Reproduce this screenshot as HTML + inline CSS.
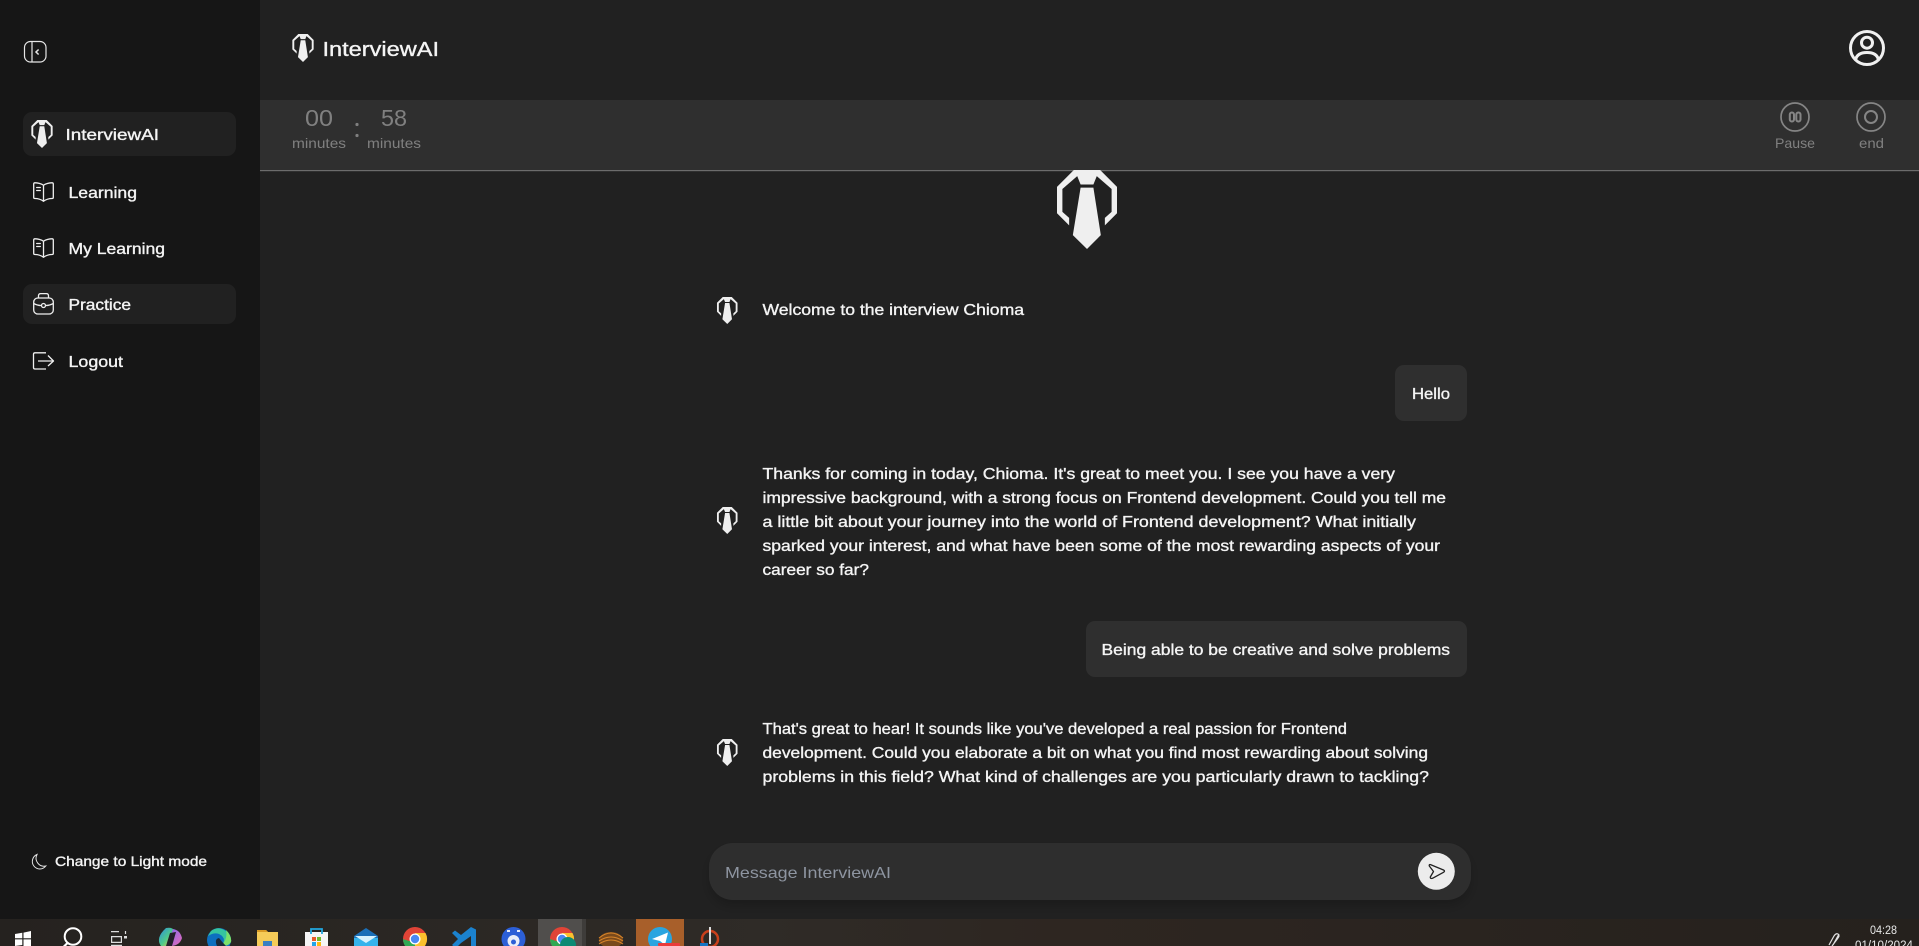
<!DOCTYPE html>
<html><head><meta charset="utf-8"><title>InterviewAI</title>
<style>
html,body{margin:0;padding:0;width:1919px;height:946px;overflow:hidden;background:#212121}
svg{display:block}
text{font-family:"Liberation Sans",sans-serif;fill:#f4f4f4;stroke:#f4f4f4;stroke-width:.36;font-size:16px}
.g{fill:#808080;stroke:none}
</style></head><body>
<svg width="1919" height="946" viewBox="0 0 1919 946" xmlns="http://www.w3.org/2000/svg">
<defs>
<symbol id="tie" viewBox="172 62 178 234">
<path fill="#efefef" d="M222 62L172 112V190L208 226V204L188 186V118L232 80L242 105H280L290 80L334 118V186L314 204V226L350 190V112L300 62Z"/>
<path fill="#efefef" d="M242 114H280L302 255L261 296L219 255Z"/>
</symbol>
<symbol id="book" viewBox="0 0 21 20"><g fill="none" stroke="#efefef" stroke-width="1.300" stroke-linejoin="round" stroke-linecap="round"><path d="M10.500 3.300C8.500 1.700 4 .7 1.900 .8Q.7 .9 .7 2V15.500Q.7 16.500 1.900 16.500C4.500 16.400 8.500 17.500 10.500 19.300C12.500 17.500 16.500 16.400 19.100 16.500Q20.300 16.500 20.300 15.500V2Q20.300 .9 19.100 .8C17 .7 12.500 1.700 10.500 3.300V19.300"/><path d="M3.700 5.500H7.300M3.700 8.500H7.300"/></g></symbol>
<linearGradient id="tb" x1="0" x2="1" y1="0" y2="0"><stop offset="0" stop-color="#25221f"/><stop offset=".4" stop-color="#2f2b27"/><stop offset=".55" stop-color="#2e2621"/><stop offset="1" stop-color="#25211d"/></linearGradient>
<linearGradient id="cl" x1="0" x2="1" y1="0" y2="1"><stop offset="0" stop-color="#2a8fe0"/><stop offset=".55" stop-color="#4fc98a"/><stop offset="1" stop-color="#f5c93a"/></linearGradient>
<linearGradient id="cr" x1="0" x2="1" y1="0" y2="1"><stop offset="0" stop-color="#7a6cf0"/><stop offset="1" stop-color="#e86ab8"/></linearGradient>
<filter id="sh" x="-5%" y="-30%" width="110%" height="170%"><feDropShadow dx="0" dy="6" stdDeviation="5" flood-color="#000" flood-opacity=".18"/></filter>
</defs>

<rect width="1919" height="946" fill="#212121"/>
<rect width="260" height="919" fill="#161616"/>

<!-- sidebar -->
<rect x="24.500" y="41.500" width="21.500" height="20.500" rx="6" fill="none" stroke="#e6e6e6" stroke-width="1.200"/>
<path d="M32 41.500V62" stroke="#e6e6e6" stroke-width="1.200"/>
<path d="M38.600 49.500L36 52L38.600 54.500" fill="none" stroke="#e6e6e6" stroke-width="1.500"/>

<rect x="23" y="112" width="213" height="44" rx="9" fill="#212121"/>
<rect x="23" y="284" width="213" height="40" rx="9" fill="#212121"/>
<use href="#tie" x="31" y="120" width="22" height="28"/>
<text x="65.500" y="140" textLength="93.500" lengthAdjust="spacingAndGlyphs">InterviewAI</text>
<use href="#book" x="33" y="182" width="21" height="20"/>
<text x="68.500" y="198" textLength="68.500" lengthAdjust="spacingAndGlyphs">Learning</text>
<use href="#book" x="33" y="238" width="21" height="20"/>
<text x="68.500" y="254" textLength="96.500" lengthAdjust="spacingAndGlyphs">My Learning</text>
<g fill="none" stroke="#efefef" stroke-width="1.300">
<rect x="33.700" y="298" width="19.600" height="16" rx="4"/>
<path d="M38.500 298V295.800Q38.500 293.600 40.700 293.600H46.300Q48.500 293.600 48.500 295.800V298"/>
<path d="M33.700 303.500Q37.500 305.500 41 305.500M53.300 303.500Q49.500 305.500 46 305.500"/>
<circle cx="43.500" cy="305.500" r="2"/>
</g>
<text x="68.500" y="310" textLength="62.500" lengthAdjust="spacingAndGlyphs">Practice</text>
<g fill="none" stroke="#efefef" stroke-width="1.300" stroke-linejoin="round">
<path d="M46 352.800H35Q33.500 352.800 33.500 354.300V367.500Q33.500 369 35 369H46"/>
<path d="M38 361H53M48 355.500L53.500 361L48 366"/>
</g>
<text x="68.500" y="367" textLength="54.500" lengthAdjust="spacingAndGlyphs">Logout</text>
<path d="M37 854.500A7.500 7.500 0 1 0 45.800 866A8 8 0 0 1 37 854.500Z" fill="none" stroke="#e6e6e6" stroke-width="1"/>
<text x="55" y="866" textLength="152" lengthAdjust="spacingAndGlyphs" style="font-size:14px">Change to Light mode</text>

<!-- header -->
<use href="#tie" x="292" y="34" width="22" height="28"/>
<text x="322.500" y="56" textLength="116.500" lengthAdjust="spacingAndGlyphs" style="font-size:20px">InterviewAI</text>
<g fill="none" stroke="#f0f0f0" stroke-width="3">
<circle cx="1867" cy="48" r="16.500"/>
<circle cx="1867" cy="42.700" r="5.500"/>
<path d="M1855.500 60Q1857 52.500 1867 52.500Q1877 52.500 1878.500 60"/>
</g>

<!-- timer bar -->
<rect x="260" y="100" width="1659" height="70" fill="#2f2f2f"/>
<rect x="260" y="170" width="1659" height="1.200" fill="#6c6c6c"/>
<text class="g" x="305" y="126" textLength="28" lengthAdjust="spacingAndGlyphs" style="font-size:23px">00</text>
<text class="g" x="292" y="148" textLength="54" lengthAdjust="spacingAndGlyphs" style="font-size:14px">minutes</text>
<circle cx="357" cy="124.500" r="1.600" fill="#808080"/><circle cx="357" cy="135.500" r="1.600" fill="#808080"/>
<text class="g" x="381" y="126" textLength="26" lengthAdjust="spacingAndGlyphs" style="font-size:23px">58</text>
<text class="g" x="367" y="148" textLength="54" lengthAdjust="spacingAndGlyphs" style="font-size:14px">minutes</text>
<g fill="none" stroke="#858585">
<circle cx="1795" cy="117" r="14" stroke-width="1.700"/>
<rect x="1789.800" y="112.500" width="4.200" height="9" rx="2" stroke-width="2"/>
<rect x="1796.300" y="112.500" width="4.200" height="9" rx="2" stroke-width="2"/>
<circle cx="1871" cy="117" r="14" stroke-width="1.700"/>
<circle cx="1871" cy="117" r="6" stroke-width="2"/>
</g>
<text class="g" x="1775" y="148" textLength="40" lengthAdjust="spacingAndGlyphs" style="font-size:14px">Pause</text>
<text class="g" x="1859" y="148" textLength="25" lengthAdjust="spacingAndGlyphs" style="font-size:14px">end</text>

<!-- big logo -->
<use href="#tie" x="1057" y="170" width="60" height="79"/>

<!-- chat -->
<use href="#tie" x="716" y="297" width="22.500" height="27"/>
<text x="762.500" y="315" textLength="261.500" lengthAdjust="spacingAndGlyphs">Welcome to the interview Chioma</text>

<rect x="1395" y="365" width="72" height="56" rx="9" fill="#2f2f2f"/>
<text x="1412" y="399" textLength="38" lengthAdjust="spacingAndGlyphs">Hello</text>

<use href="#tie" x="716" y="507" width="22.500" height="27"/>
<text x="762.500" y="479" textLength="632.500" lengthAdjust="spacingAndGlyphs">Thanks for coming in today, Chioma. It's great to meet you. I see you have a very</text>
<text x="762.500" y="503" textLength="683.500" lengthAdjust="spacingAndGlyphs">impressive background, with a strong focus on Frontend development. Could you tell me</text>
<text x="762.500" y="527" textLength="653.500" lengthAdjust="spacingAndGlyphs">a little bit about your journey into the world of Frontend development? What initially</text>
<text x="762.500" y="551" textLength="677.500" lengthAdjust="spacingAndGlyphs">sparked your interest, and what have been some of the most rewarding aspects of your</text>
<text x="762.500" y="575" textLength="106.500" lengthAdjust="spacingAndGlyphs">career so far?</text>

<rect x="1086" y="621" width="381" height="56" rx="9" fill="#2f2f2f"/>
<text x="1101.500" y="655" textLength="348.500" lengthAdjust="spacingAndGlyphs">Being able to be creative and solve problems</text>

<use href="#tie" x="716" y="739" width="22.500" height="27"/>
<text x="762.500" y="734" textLength="584.500" lengthAdjust="spacingAndGlyphs">That's great to hear! It sounds like you've developed a real passion for Frontend</text>
<text x="762.500" y="758" textLength="665.500" lengthAdjust="spacingAndGlyphs">development. Could you elaborate a bit on what you find most rewarding about solving</text>
<text x="762.500" y="782" textLength="666.500" lengthAdjust="spacingAndGlyphs">problems in this field? What kind of challenges are you particularly drawn to tackling?</text>

<!-- input -->
<rect x="709" y="843" width="762" height="57" rx="24" fill="#2f2f2f" filter="url(#sh)"/>
<text x="725" y="878" textLength="166" lengthAdjust="spacingAndGlyphs" style="fill:#8e95a1;stroke:none">Message InterviewAI</text>
<circle cx="1436.300" cy="871.300" r="18.500" fill="#ececec"/>
<path d="M1430.500 864.600L1443.500 870Q1445.500 871 1443.500 872.300L1432.500 878.300Q1430 879 1430.300 877L1433.500 871.500L1429.300 866Q1428.800 864.300 1430.500 864.600Z" fill="none" stroke="#222" stroke-width="1.300" stroke-linejoin="round"/>

<!-- taskbar -->
<rect y="919" width="1919" height="27" fill="url(#tb)"/>
<path fill="#fff" d="M15 934L22.300 932.800V938.200H15ZM23.500 932.600L31 931V938.200H23.500ZM15 939.400H22.300V945L15 946ZM23.500 939.400H31V946H23.500Z"/>
<circle cx="73" cy="936.500" r="8.300" fill="none" stroke="#fff" stroke-width="2"/><path d="M67.500 943L63.500 947" stroke="#fff" stroke-width="2.200"/>
<g fill="none" stroke="#ddd" stroke-width="1.200"><path d="M111 931.600H119M125.500 931V934M111.600 936.600H121.400V942.400H111.600ZM111 945.400H122"/></g><rect x="124" y="936" width="3" height="2.500" fill="#ddd"/>
<!-- copilot -->
<path d="M166 928Q172 927 174 930L170 946H161Q155 938 166 928Z" fill="url(#cl)"/>
<path d="M173 929Q180 930 182 938Q180 945 172 946H167Z" fill="url(#cr)"/>
<path d="M170 933L176 932L172 946H166Z" fill="#231f2a"/>
<!-- edge -->
<circle cx="219" cy="940" r="12" fill="#0d6fbf"/>
<path d="M211 931Q219 925 227 932Q232 937 231 942Q228 947 222 945Q227 938 219 934Q214 932 208 936Z" fill="#35c4a0"/>
<path d="M226 930Q232 936 231 942Q228 947 222 945Q228 938 226 930Z" fill="#7ce06a"/>
<path d="M217 946Q214 939 219 938Q222 942 226 946Z" fill="#1a2a3a"/>
<!-- folder -->
<path d="M257 930H266L268 932H278V946H257Z" fill="#f5cb58"/><path d="M257 930H266L268 932H257Z" fill="#d99a24"/><rect x="263" y="941" width="9" height="5" fill="#3a7fc2"/>
<!-- store -->
<path d="M305 932H328V946H305Z" fill="#f5f5f5"/><path d="M311 934V929H322V934" fill="none" stroke="#22a8e0" stroke-width="1.800"/>
<rect x="312" y="937" width="4" height="4" fill="#e85a2a"/><rect x="317" y="937" width="4" height="4" fill="#6fba2c"/><rect x="312" y="942" width="4" height="4" fill="#21a4ea"/><rect x="317" y="942" width="4" height="4" fill="#fdb813"/>
<!-- mail -->
<path d="M354 936L366 928L378 936V946H354Z" fill="#1b6fb8"/><path d="M354 938H378V946H354Z" fill="#35b3ec"/><path d="M355 936H377L366 943Z" fill="#d8f2fd"/>
<!-- chrome -->
<g id="chrome"><circle cx="415" cy="939" r="12" fill="#e04437"/><path d="M403 939A12 12 0 0 0 415 951L421 941L409 941Z" fill="#30a853"/><path d="M415 951A12 12 0 0 0 425.500 933H415Z" fill="#fbc02d"/><circle cx="415" cy="939" r="5.500" fill="#fff"/><circle cx="415" cy="939" r="4.200" fill="#4a89f3"/></g>
<!-- vscode -->
<path d="M471 927L476 929.500V946H471V936L461 943L456 948L452 945L458 939L452 933L455 930.500L461 935Z" fill="#1b82ce"/>
<!-- blue -->
<circle cx="513.500" cy="939" r="12" fill="#2c5fd6"/><circle cx="513.500" cy="941" r="6" fill="#e8edf8"/><circle cx="513.500" cy="942" r="2.500" fill="#2c5fd6"/><path d="M507 931H510M517 931H520" stroke="#e8edf8" stroke-width="2"/>
<!-- active chrome -->
<rect x="538" y="919" width="44" height="27" fill="#504e4c"/><rect x="582" y="919" width="4" height="27" fill="#3e3c3a"/>
<use href="#chrome" x="147"/>
<circle cx="568" cy="945" r="8" fill="#0c8a74"/>
<!-- coil -->
<ellipse cx="611" cy="940" rx="12" ry="8" fill="#7a4a1c"/><g fill="none" stroke="#d9862a" stroke-width="1"><path d="M599 938Q611 928 623 938M599 941Q611 933 623 941M599 944Q611 936 623 944"/></g>
<!-- telegram -->
<rect x="636" y="919" width="48" height="27" fill="#a85f2a"/>
<circle cx="660" cy="939" r="12" fill="#2aa5e0"/><path d="M652 939L668 932.500L665 945L660 941Z" fill="#fff"/>
<rect x="658" y="943" width="22" height="3" rx="1" fill="#ea3b3b"/>
<!-- snip -->
<circle cx="710" cy="939" r="8" fill="none" stroke="#c9401c" stroke-width="2.500"/><path d="M709 927H711V944H709Z" fill="#ddd"/><rect x="700" y="943" width="8" height="3" fill="#1474c4"/>

<g fill="none" stroke="#e2e2e2" stroke-width="1.200"><path d="M1829 945L1834 936Q1836 933 1838 934Q1840 936 1838 938L1832 946M1833 945L1839 934"/></g>
<text x="1870" y="934" textLength="27" lengthAdjust="spacingAndGlyphs" style="font-size:11.500px;stroke:none;fill:#e8e8e8">04:28</text>
<text x="1855" y="949" textLength="58" lengthAdjust="spacingAndGlyphs" style="font-size:11.500px;stroke:none;fill:#e8e8e8">01/10/2024</text>
</svg>
</body></html>
